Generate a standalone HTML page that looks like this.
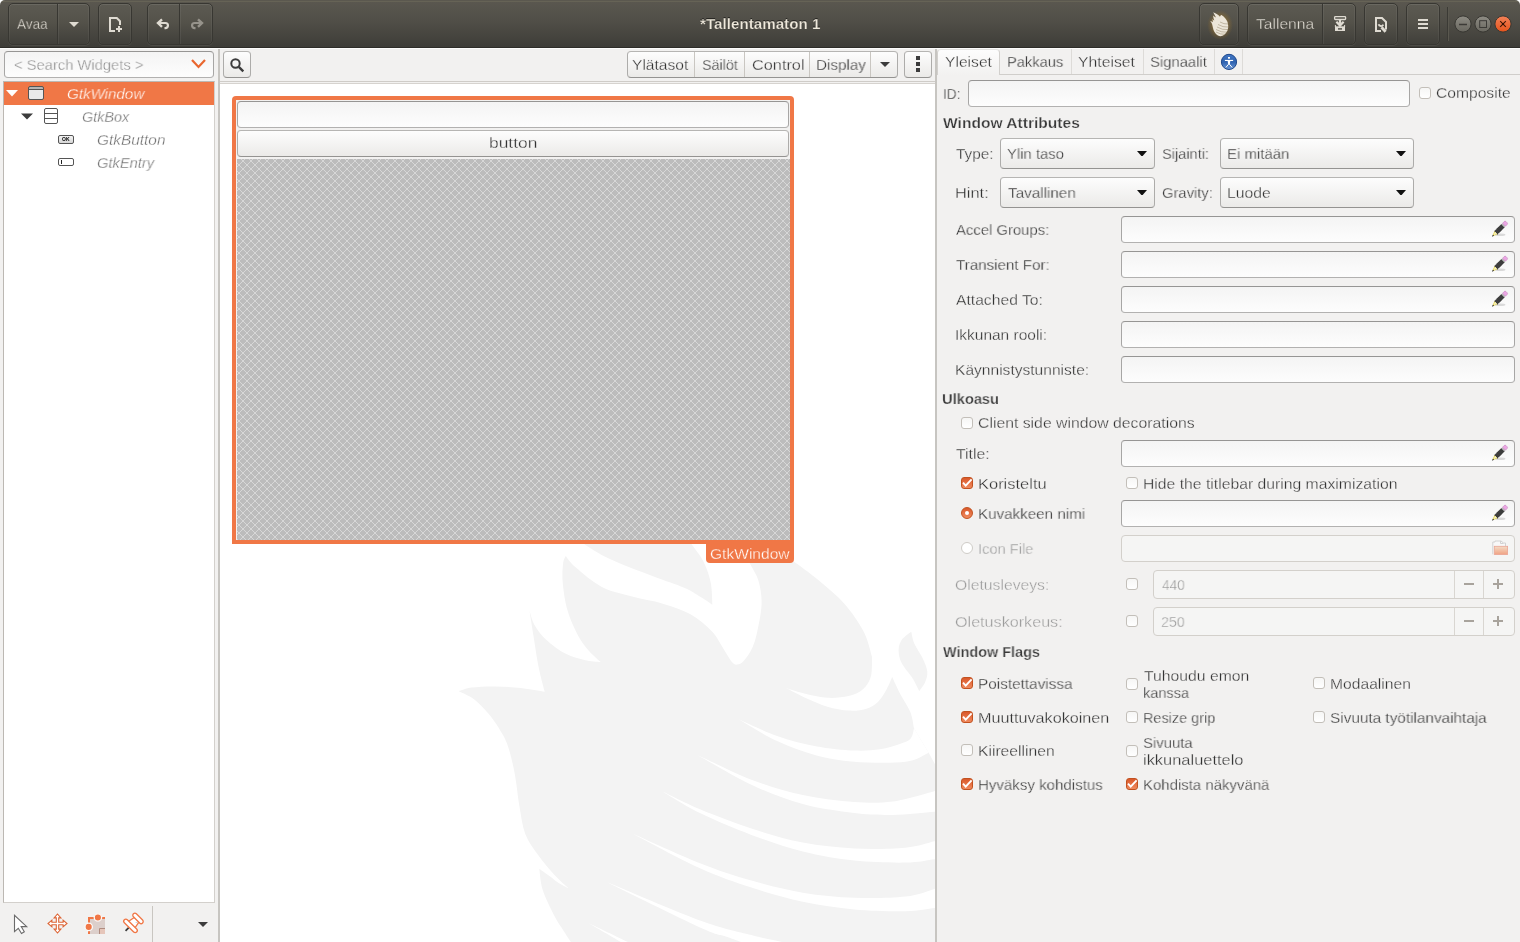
<!DOCTYPE html>
<html lang="fi"><head><meta charset="utf-8"><title>*Tallentamaton 1 - Glade</title>
<style>
html,body{margin:0;padding:0}
body{width:1520px;height:942px;overflow:hidden;background:#fff;font-family:"Liberation Sans",sans-serif;font-size:15px;color:#3c3c3c}
#w{position:absolute;left:0;top:0;width:1520px;height:942px;overflow:hidden;background:#f2f1f0;border-radius:5px 5px 0 0}
#w div,#w svg.ic,#w i.hdiv{position:absolute}
.t{height:20px;line-height:20px;white-space:pre;will-change:transform;transform-origin:0 0}
.hdr{left:0;top:0;width:1520px;height:48px;background:linear-gradient(#5b584f 0,#5b584f 1px,#666356 1px,#666356 2px,#5a574f 2px,#514f48 20px,#3e3d38 47px,#2e2d29 47px,#2e2d29 48px)}
.hb{top:3px;height:42px;box-sizing:border-box;border:1px solid #383732;border-radius:5px;background:linear-gradient(#5c5a52,#54524a 45%,#403f3a);box-shadow:inset 0 1px 0 rgba(255,255,255,.09),inset 1px 0 0 rgba(255,255,255,.05),inset -1px 0 0 rgba(255,255,255,.05),0 1px 0 rgba(255,255,255,.07)}
.hdiv{top:0;width:1px;height:40px;background:#383732;box-shadow:1px 0 0 rgba(255,255,255,.06)}
</style></head>
<body><div id="w">
<div class="hdr"></div>
<div class="hb" style="left:8px;width:82px"><i class="hdiv" style="left:48px"></i></div>
<div class="t" style="left:16.7px;top:14px;font-size:15.4px;color:#dfdbd2;transform:scaleX(0.88);-webkit-text-stroke:0.3px #4e4c45;">Avaa</div>
<div class="hb" style="left:98px;width:34px"></div>
<div class="hb" style="left:147px;width:66px"><i class="hdiv" style="left:31px"></i></div>
<div class="t" style="left:699.5px;top:14px;font-size:15.2px;color:#efe9dc;font-weight:bold;text-shadow:0 -1px 0 rgba(0,0,0,.5);-webkit-text-stroke:0.25px #4e4c45;">*Tallentamaton 1</div>
<div class="hb" style="left:1199px;width:40px"></div>
<div class="hb" style="left:1247px;width:109px"><i class="hdiv" style="left:74px"></i></div>
<div class="t" style="left:1255.7px;top:14px;font-size:15.4px;color:#dfdbd2;transform:scaleX(1.014);-webkit-text-stroke:0.3px #4e4c45;">Tallenna</div>
<div class="hb" style="left:1364px;width:34px"></div>
<div class="hb" style="left:1406px;width:34px"></div>
<div style="left:1447px;top:7px;width:1px;height:34px;background:#3b3a35;box-shadow:1px 0 0 #5a584f"></div>
<svg class="ic" style="left:0;top:0" width="1520" height="47" viewBox="0 0 1520 47"><defs><linearGradient id="wg" x1="0" y1="0" x2="0" y2="1"><stop offset="0" stop-color="#8e8c84"/><stop offset="1" stop-color="#69675f"/></linearGradient><linearGradient id="wo" x1="0" y1="0" x2="0" y2="1"><stop offset="0" stop-color="#f38258"/><stop offset="1" stop-color="#e5531b"/></linearGradient><radialGradient id="glow"><stop offset="0" stop-color="#c8962e" stop-opacity=".75"/><stop offset=".55" stop-color="#b8862a" stop-opacity=".4"/><stop offset="1" stop-color="#a87a28" stop-opacity="0"/></radialGradient></defs><g fill="none" stroke="#dfdbd2" stroke-width="2"><path d="M69 22h10l-5 5z" fill="#dfdbd2" stroke="none"/><path d="M115 31H110V18H116.800L120 21.200V25" stroke-linejoin="miter"/><path d="M116 29H122M119 26V32"/><path d="M162 19.300L158 23L162 26.800" stroke-width="2.400"/><path d="M158.500 23H165.400A2.550 2.550 0 0 1 165.400 28.100H164.500" stroke-width="2.200"/><g stroke="#96938b"><path d="M198 19.300L202 23L198 26.800" stroke-width="2.400"/><path d="M201.500 23H194.600A2.550 2.550 0 0 0 194.600 28.100H195.500" stroke-width="2.200"/></g><rect x="1334.600" y="16.600" width="11" height="2.900" rx=".8" stroke-width="1.300"/><path d="M1340 20V25.500M1336.400 21.800L1340 25.600L1343.600 21.800" stroke-width="2.200"/><path d="M1335 26.300H1345V31H1335Z" fill="#dfdbd2" stroke="none"/><path d="M1335.400 27V25M1344.600 27V25" stroke-width="1"/><path d="M1338 28.200h4v1.400h-4z" fill="#4a4842" stroke="none"/><path d="M1381 31H1376V18H1382L1386 22V29.500"/><path d="M1378.600 24.200A2.500 2.500 0 0 0 1383.300 24.600" stroke-width="1.900"/><path d="M1381.500 27.200L1385.600 31.800" stroke-width="2.800"/><path d="M1418 20H1428M1418 24H1428M1418 28H1428"/></g><ellipse cx="1220" cy="25" rx="13" ry="15" fill="url(#glow)"/><path d="M1213.200 12.200C1215 13 1218.500 14.500 1220 16.800C1220.300 15.500 1221 15 1221.500 15C1224.500 17 1226.500 19.500 1227.300 21.500L1226.800 20.300C1228.300 23.500 1228.800 27.500 1227.500 30.500C1226 34 1223 36.200 1220.500 36.200C1217 36 1214 32.500 1213 28C1212.400 25 1212 23 1210.200 21.300C1211.300 21.200 1212.300 21.600 1213 22.300C1212.700 21 1212.600 20 1212.400 19C1213 19.800 1213.600 20.200 1214.300 20.500C1213.500 18.500 1213.100 16.500 1213.300 15.500C1214 16.500 1215 17.200 1216 17.500C1215 15.500 1214 14 1213.200 12.200Z" fill="#ece6d9"/><g stroke="#7a6a48" stroke-width=".7" fill="none" opacity=".55"><path d="M1218 24.500q5 3 10 2.500M1217 27q5.500 3.200 11 2.600M1216 29.500q5.500 3.200 11 2.700M1216 32q4.500 2.600 9 2.300M1220 22q4 2.300 8 2"/></g><circle cx="1463" cy="24" r="8.100" fill="url(#wg)" stroke="#383732" stroke-width="1"/><circle cx="1483" cy="24" r="8.100" fill="url(#wg)" stroke="#383732" stroke-width="1"/><circle cx="1503" cy="24" r="8.100" fill="url(#wo)" stroke="#383732" stroke-width="1"/><path d="M1459 24.500H1467" stroke="#3c3b37" stroke-width="1.500"/><rect x="1479.700" y="20.700" width="6.800" height="6.800" fill="none" stroke="#3c3b37" stroke-width="1"/><path d="M1500.200 21.200L1505.800 26.800M1505.800 21.200L1500.200 26.800" stroke="#3d1606" stroke-width="1.100"/><circle cx="1503" cy="24" r="1" fill="#2c1004"/></svg>
<div style="left:0px;top:48px;width:1520px;height:1px;background:#fdfdfc"></div>
<div style="left:4px;top:51px;width:210px;height:27px;box-sizing:border-box;border:1px solid #a7a6a5;border-top-color:#969594;border-bottom-color:#b2b1b0;border-radius:4px;background:linear-gradient(#f4f4f4,#fdfdfd)"></div>
<div class="t" style="left:13.7px;top:55px;font-size:15.4px;color:#8c8c8c;transform:scaleX(0.9575);-webkit-text-stroke:0.3px #fbfbfb;">&lt; Search Widgets &gt;</div>
<svg class="ic" style="left:190px;top:58px" width="17" height="12" viewBox="0 0 17 12"><path d="M2 2l6.500 7 6.500-7" fill="none" stroke="#e9672f" stroke-width="2.2"/></svg>
<div style="left:3px;top:81px;width:212px;height:822px;box-sizing:border-box;border:1px solid #bcb8b3;border-right-color:#d3d0cc;border-bottom-color:#d3d0cc;background:#fff"></div>
<div style="left:4px;top:82px;width:210px;height:23px;background:#f07746"></div>
<svg class="ic" style="left:6px;top:90px" width="12" height="7"><path d="M0 0h12l-6 6.500z" fill="#fff"/></svg>
<svg class="ic" style="left:21px;top:113px" width="12" height="7"><path d="M0 .5h12l-6 6z" fill="#3c3c3c"/></svg>
<div style="left:28px;top:86px;width:16px;height:14px;box-sizing:border-box;border:1px solid #555;border-radius:2px;background:linear-gradient(#b4b4b4 0,#b4b4b4 2px,#555 2px,#555 3px,#e9e9e9 3px)"></div>
<div style="left:44px;top:108px;width:14px;height:16px;box-sizing:border-box;border:1px solid #555;border-radius:2px;background:linear-gradient(#fff 0,#fff 4px,#555 4px,#555 5px,#fff 5px,#fff 9px,#555 9px,#555 10px,#fff 10px)"></div>
<div style="left:58px;top:135px;width:16px;height:9px;box-sizing:border-box;border:1px solid #555;border-radius:2px;background:linear-gradient(#f4f4f4,#d6d6d6)"><b style="position:absolute;left:3px;top:0;font-size:5px;line-height:7px;color:#000;font-weight:bold;will-change:transform">OK</b></div>
<div style="left:58px;top:158px;width:16px;height:8px;box-sizing:border-box;border:1px solid #555;border-radius:2px;background:#fff"><i style="position:absolute;left:2px;top:1px;width:1px;height:4px;background:#222"></i></div>
<div class="t" style="left:66.8px;top:84px;font-size:15.4px;color:#fff;font-style:italic;transform:scaleX(0.9833);-webkit-text-stroke:0.3px #f07746;">GtkWindow</div>
<div class="t" style="left:82.2px;top:107px;font-size:15.4px;color:#727272;font-style:italic;transform:scaleX(0.934);-webkit-text-stroke:0.3px #fff;">GtkBox</div>
<div class="t" style="left:97.3px;top:130px;font-size:15.4px;color:#727272;font-style:italic;-webkit-text-stroke:0.3px #fff;">GtkButton</div>
<div class="t" style="left:97.3px;top:153px;font-size:15.4px;color:#727272;font-style:italic;transform:scaleX(0.9533);-webkit-text-stroke:0.3px #fff;">GtkEntry</div>
<div style="left:152px;top:906px;width:1px;height:36px;background:#c9c6c1"></div>
<svg class="ic" style="left:198px;top:922px" width="10" height="5"><path d="M0 0h10l-5 5z" fill="#3c3c3c"/></svg>
<svg class="ic" style="left:0;top:905px" width="217" height="37" viewBox="0 905 217 37"><path d="M14.500 915.300V931.600L18.300 928.300L21.500 933.500L24.300 931.800L21.200 926.600H26.700Z" fill="#fff" stroke="#6b6b6b" stroke-width="1.100" stroke-linejoin="miter"/><g transform="translate(57.500 923.500)"><path d="M0-9.500L3.400-5.600H1.200V-1.200H5.600V-3.400L9.500 0L5.600 3.400V1.200H1.200V5.600H3.400L0 9.500L-3.400 5.600H-1.200V1.200H-5.600V3.400L-9.500 0L-5.600-3.400V-1.200H-1.200V-5.600H-3.400Z" fill="#fff" stroke="#dd6434" stroke-width="1.100"/></g><rect x="88" y="917" width="17" height="17" fill="#dccfcb"/><path d="M89 934V918H105" fill="none" stroke="#f07746" stroke-width="2"/><rect x="99.500" y="928.500" width="5.500" height="5.500" fill="#e6c6ba"/><path d="M99.500 934V928.500H105" fill="none" stroke="#b08c80" stroke-width="1"/><circle cx="97.900" cy="917.500" r="3.700" fill="#f07746" stroke="#fbfaf9" stroke-width="1.300"/><circle cx="88.700" cy="926.900" r="3.700" fill="#f07746" stroke="#fbfaf9" stroke-width="1.300"/><g transform="translate(130.500 925.900) rotate(-45)"><path d="M-2.500 0H-7" stroke="#3a3a3a" stroke-width="1.700"/><path d="M1.500-4.600L9-3.200V3.200L1.500 4.600Z" fill="#fff" stroke="#f07746" stroke-width="1.300"/><path d="M6 1.200L8.200 3" stroke="#cfd4d4" stroke-width="1"/><rect x="-2.100" y="-8.700" width="4.200" height="17.400" rx="2.100" fill="#fff" stroke="#f07746" stroke-width="1.300"/><rect x="8.500" y="-6.500" width="4.200" height="13" rx="2.100" fill="#fff" stroke="#f07746" stroke-width="1.300"/></g></svg>
<div style="left:218px;top:49px;width:2px;height:893px;background:#c7c5c1"></div>
<div style="left:935px;top:49px;width:2px;height:893px;background:#c7c5c1"></div>
<div style="left:220px;top:84px;width:715px;height:858px;background:#fff"></div>
<div style="left:220px;top:81px;width:715px;height:1px;background:#cfccc8"></div>
<div style="left:220px;top:83px;width:715px;height:1px;background:#d6d3cf"></div>
<div style="left:223px;top:51px;width:28px;height:27px;box-sizing:border-box;border:1px solid #adacaa;border-top-color:#b6b5b3;border-bottom-color:#949391;border-radius:4px;background:linear-gradient(#fdfdfd,#ebeae8)"></div>
<svg class="ic" style="left:229px;top:57px" width="16" height="16" viewBox="0 0 16 16"><circle cx="6.500" cy="6.500" r="4.200" fill="none" stroke="#3c3c3c" stroke-width="2"/><path d="M9.800 9.800l4.500 4.500" stroke="#3c3c3c" stroke-width="2.400"/></svg>
<div style="left:627px;top:51px;width:271px;height:27px;box-sizing:border-box;border:1px solid #adacaa;border-top-color:#b6b5b3;border-bottom-color:#949391;border-radius:4px;background:linear-gradient(#fdfdfd,#ebeae8)"></div>
<div style="left:694px;top:52px;width:1px;height:25px;background:#c9c6c1"></div>
<div style="left:744px;top:52px;width:1px;height:25px;background:#c9c6c1"></div>
<div style="left:809px;top:52px;width:1px;height:25px;background:#c9c6c1"></div>
<div style="left:870px;top:52px;width:1px;height:25px;background:#c9c6c1"></div>
<div class="t" style="left:631.7px;top:55px;font-size:15.4px;color:#333;transform:scaleX(1.0127);-webkit-text-stroke:0.3px #f4f3f2;">Ylätasot</div>
<div class="t" style="left:701.8px;top:55px;font-size:15.4px;color:#333;transform:scaleX(0.9289);-webkit-text-stroke:0.3px #f4f3f2;">Säilöt</div>
<div class="t" style="left:751.6px;top:55px;font-size:15.4px;color:#333;transform:scaleX(1.0583);-webkit-text-stroke:0.3px #f4f3f2;">Control</div>
<div class="t" style="left:815.9px;top:55px;font-size:15.4px;color:#333;transform:scaleX(0.9878);-webkit-text-stroke:0.3px #f4f3f2;">Display</div>
<svg class="ic" style="left:880px;top:62px" width="10" height="5"><path d="M0 0h10l-5 5z" fill="#3c3c3c"/></svg>
<div style="left:904px;top:51px;width:28px;height:27px;box-sizing:border-box;border:1px solid #adacaa;border-top-color:#b6b5b3;border-bottom-color:#949391;border-radius:4px;background:linear-gradient(#fdfdfd,#ebeae8)"></div>
<div style="left:916px;top:56px;width:4px;height:4px;background:#3c3c3c"></div>
<div style="left:916px;top:62px;width:4px;height:4px;background:#3c3c3c"></div>
<div style="left:916px;top:68px;width:4px;height:4px;background:#3c3c3c"></div>
<svg class="ic" style="left:220px;top:84px" width="715" height="858" viewBox="220 84 715 858"><path d="M584.4 538.0C584.4 539.0 584.4 543.2 584.4 544.2C588.6 546.7 598.6 553.8 609.9 559.1C621.2 564.4 639.9 571.3 652.3 576.1C664.7 580.9 676.1 584.3 684.2 587.8C692.3 591.3 696.4 594.5 701.1 597.3C705.8 600.1 710.5 603.5 712.4 604.8C712.1 601.1 712.2 589.8 710.7 582.5C709.2 575.2 706.5 567.6 703.3 561.2C700.1 554.8 693.5 547.0 691.6 544.2C691.6 543.2 691.6 539.0 691.6 538.0C673.7 538.0 602.3 538.0 584.4 538.0Z" fill="#f3f3f3"/><path d="M565.7 555.9C567.4 557.9 570.0 562.5 575.9 567.6C581.8 572.7 592.2 581.9 601.4 586.7C610.6 591.5 620.9 593.5 631.1 596.3C641.4 599.1 653.0 600.7 662.9 603.7C672.8 606.7 682.4 609.7 690.5 614.3C698.6 618.9 706.1 625.3 711.8 631.3C717.5 637.3 721.1 645.3 724.5 650.4C727.9 655.5 729.8 659.7 731.9 662.1C734.0 664.5 735.2 664.8 737.2 664.6C739.2 664.4 741.1 663.7 743.6 661.0C746.1 658.3 749.8 653.2 752.1 648.3C754.4 643.3 755.7 638.7 757.3 631.3C758.9 623.9 761.4 612.2 761.6 603.7C761.8 595.2 760.4 587.1 758.4 580.4C756.4 573.7 752.6 569.1 749.9 563.4C747.2 557.7 743.3 548.9 742.0 546.0C742.0 545.0 742.0 541.0 742.0 540.0C750.7 540.0 785.3 540.0 794.0 540.0C793.9 543.5 793.6 557.7 793.5 561.2C797.7 564.4 810.4 573.3 818.9 580.4C827.4 587.5 837.0 595.2 844.4 603.7C851.8 612.2 858.9 622.4 863.5 631.3C868.1 640.1 870.6 652.5 872.0 656.8C875.4 660.2 888.8 673.6 892.2 677.0C893.5 679.6 896.7 687.1 899.7 692.9C902.7 698.7 907.9 706.1 910.3 712.0C912.7 717.9 913.4 725.6 914.0 728.3C916.5 732.4 926.2 748.6 928.7 752.7C929.9 754.9 934.8 763.8 936.0 766.0C936.7 766.0 939.3 766.0 940.0 766.0C940.0 796.0 940.0 916.0 940.0 946.0C878.7 946.0 633.3 946.0 572.0 946.0C571.8 945.3 571.0 942.7 570.8 942.0C569.2 939.6 564.2 932.0 561.5 927.6C558.8 923.2 557.6 922.1 554.5 915.9C551.4 909.7 545.3 898.1 542.8 890.2C540.3 882.3 539.9 872.3 539.3 868.7C541.0 870.0 546.5 873.8 549.8 876.2C553.1 878.6 556.0 881.2 559.1 883.2C562.2 885.2 566.9 887.4 568.5 888.3C566.2 886.1 559.6 880.5 554.5 875.0C549.4 869.5 543.0 861.9 538.1 855.1C533.2 848.3 528.4 842.3 525.3 834.1C522.2 825.9 521.2 816.2 519.4 806.1C517.6 796.0 516.7 783.5 514.7 773.4C512.8 763.3 510.2 752.8 507.7 745.4C505.1 738.0 502.5 734.2 499.4 729.0C496.2 723.8 493.0 719.1 488.8 714.1C484.6 709.1 479.0 703.0 474.0 699.2C469.0 695.4 461.2 692.5 458.7 691.2C460.9 690.6 465.7 688.4 471.8 687.6C477.9 686.8 487.0 686.4 495.2 686.5C503.4 686.6 512.5 687.1 520.7 688.0C529.0 688.9 540.7 691.2 544.7 691.8C543.7 687.7 540.6 676.8 538.7 667.4C536.8 658.0 534.9 644.9 533.4 635.5C531.9 626.1 530.2 615.2 529.6 611.1C530.4 613.4 531.7 620.1 534.5 624.9C537.3 629.7 541.1 635.0 546.2 639.8C551.3 644.6 558.9 650.2 565.3 653.6C571.7 657.0 578.5 658.6 584.4 660.0C590.3 661.4 598.0 661.8 600.7 662.1C598.7 660.1 592.4 654.8 588.6 650.4C584.8 646.0 581.5 642.2 578.0 635.5C574.5 628.8 569.9 618.9 567.4 610.1C564.9 601.3 563.4 590.3 562.7 582.5C562.0 574.7 562.6 567.8 563.1 563.4C563.6 559.0 565.3 557.1 565.7 555.9Z" fill="#f3f3f3"/><path d="M911.3 631.8C909.7 633.1 903.9 636.7 901.8 639.8C899.7 642.9 898.6 646.5 898.6 650.4C898.6 654.3 899.5 658.6 901.8 663.2C904.1 667.8 909.5 673.4 912.4 678.1C915.3 682.8 918.1 689.0 919.2 691.2C920.2 689.7 923.8 685.5 925.1 682.3C926.5 679.0 927.6 675.6 927.3 671.7C926.9 667.8 925.1 663.6 923.0 659.0C920.9 654.4 916.5 648.6 914.5 644.1C912.5 639.6 911.8 633.8 911.3 631.8Z" fill="#f3f3f3"/><path d="M786.0 688.0C789.4 689.0 799.3 692.4 806.2 694.0C813.1 695.6 820.3 697.4 827.4 697.8C834.5 698.1 842.7 697.6 848.7 696.1C854.7 694.6 859.8 692.1 863.5 688.7C867.2 685.3 869.6 681.2 871.0 675.9C872.4 670.6 871.8 660.0 872.0 656.8C875.8 655.7 891.2 651.1 895.0 650.0C894.5 654.5 892.7 672.5 892.2 677.0C891.3 679.0 889.2 684.6 886.9 688.7C884.6 692.8 881.9 698.0 878.4 701.4C874.9 704.8 870.7 707.4 865.7 708.9C860.8 710.4 855.1 711.0 848.7 710.6C842.3 710.2 834.5 708.8 827.4 706.7C820.3 704.6 813.1 701.3 806.2 698.2C799.3 695.1 789.4 689.7 786.0 688.0Z" fill="#fff"/><path d="M738.5 719.3C744.9 722.1 764.2 731.5 777.1 736.0C790.0 740.5 802.8 743.8 815.6 746.2C828.5 748.6 843.5 750.1 854.2 750.6C864.9 751.1 872.2 750.4 879.9 749.3C887.6 748.1 895.3 745.5 900.4 743.7C905.5 741.9 908.4 741.1 910.7 738.5C913.0 735.9 913.5 730.0 914.0 728.3C916.5 732.4 926.2 748.6 928.7 752.7C924.8 754.2 917.9 760.2 905.5 761.7C893.1 763.2 869.2 762.8 854.2 761.7C839.2 760.6 828.5 758.6 815.6 755.2C802.8 751.8 790.0 747.1 777.1 741.1C764.2 735.1 744.9 722.9 738.5 719.3Z" fill="#fff"/><path d="M697.0 754.7C706.1 758.9 733.8 773.0 751.4 779.7C769.0 786.4 785.7 791.4 802.8 795.1C819.9 798.8 839.2 800.9 854.2 802.0C869.2 803.1 879.4 803.3 892.7 801.5C906.1 799.7 926.4 793.3 934.3 791.2C942.2 789.1 939.0 789.4 940.0 789.0C940.0 792.5 940.0 806.5 940.0 810.0C939.0 810.3 942.2 811.0 934.3 811.8C926.4 812.6 906.1 814.7 892.7 814.9C879.4 815.1 869.2 814.9 854.2 813.1C839.2 811.3 819.9 808.8 802.8 804.1C785.7 799.4 769.0 793.0 751.4 784.8C733.8 776.6 706.1 759.7 697.0 754.7Z" fill="#fff"/><path d="M662.6 791.4C668.8 794.4 685.2 803.0 700.0 809.2C714.8 815.4 734.3 822.9 751.4 828.5C768.5 834.1 785.7 839.3 802.8 842.6C819.9 845.9 837.1 847.6 854.2 848.5C871.3 849.4 892.1 848.9 905.5 847.7C918.9 846.5 928.5 842.6 934.3 841.3C940.0 840.0 939.0 840.2 940.0 840.0C940.0 843.0 940.0 855.0 940.0 858.0C939.0 858.2 940.0 858.5 934.3 859.3C928.5 860.1 918.9 862.4 905.5 862.6C892.1 862.8 871.3 862.4 854.2 860.6C837.1 858.8 819.9 855.9 802.8 851.6C785.7 847.3 768.5 841.3 751.4 834.9C734.3 828.5 714.8 820.4 700.0 813.1C685.2 805.9 668.8 795.0 662.6 791.4Z" fill="#fff"/><path d="M632.7 833.7C643.9 838.6 680.2 855.4 700.0 863.2C719.8 871.0 734.3 875.7 751.4 880.6C768.5 885.5 785.7 889.8 802.8 892.7C819.9 895.6 837.1 897.1 854.2 897.8C871.3 898.4 892.1 898.1 905.5 896.6C918.9 895.1 928.5 890.5 934.3 888.9C940.0 887.3 939.0 887.3 940.0 887.0C940.0 890.3 940.0 903.7 940.0 907.0C939.0 907.2 940.0 907.4 934.3 908.1C928.5 908.8 918.9 911.0 905.5 911.2C892.1 911.4 871.3 911.0 854.2 909.4C837.1 907.8 819.9 905.3 802.8 901.7C785.7 898.1 768.5 893.2 751.4 887.6C734.3 882.0 719.8 877.3 700.0 868.3C680.2 859.3 643.9 839.5 632.7 833.7Z" fill="#fff"/><path d="M607.7 882.5C623.1 888.8 676.0 911.7 700.0 920.5C724.0 929.3 737.7 931.5 751.4 935.1C765.1 938.7 774.1 940.2 782.2 942.0C790.3 943.8 797.0 945.3 800.0 946.0C793.3 946.7 766.7 949.3 760.0 950.0C756.8 948.7 746.7 944.3 741.0 942.0C735.3 939.7 732.5 938.8 725.7 936.4C718.9 934.0 719.7 936.4 700.0 927.4C680.3 918.4 623.1 890.0 607.7 882.5Z" fill="#fff"/><path d="M588.3 922.9C594.9 926.1 619.4 937.8 628.0 942.0C636.6 946.2 638.0 947.0 640.0 948.0C638.3 948.0 631.7 948.0 630.0 948.0C628.5 947.0 628.0 946.2 621.0 942.0C614.0 937.8 593.8 926.1 588.3 922.9Z" fill="#fff"/></svg>
<div style="left:232px;top:96px;width:562px;height:448px;background:#f07746;border-radius:4px 4px 0 0"></div>
<div style="left:706px;top:540px;width:88px;height:23px;background:#f07746;border-radius:0 0 4px 4px"></div>
<div style="left:236px;top:100px;width:554px;height:440px;background:#f2f1f0"></div>
<svg class="ic" style="left:237px;top:159px" width="553" height="381"><defs><pattern id="ph" width="8" height="8" patternUnits="userSpaceOnUse" x="2" y="6"><rect width="8" height="8" fill="#bcbcbc"/><path d="M-1 -1L9 9M9 -1L-1 9M-1 7L1 9M7 -1L9 1M7 9L9 7M-1 1L1 -1" stroke="#dadada" stroke-width=".9" fill="none"/></pattern></defs><rect width="553" height="381" fill="url(#ph)"/></svg>
<div style="left:237px;top:101px;width:552px;height:27px;box-sizing:border-box;border:1px solid #a7a6a5;border-top-color:#969594;border-bottom-color:#b2b1b0;border-radius:4px;background:linear-gradient(#f4f4f4,#fdfdfd)"></div>
<div style="left:237px;top:130px;width:552px;height:27px;box-sizing:border-box;border:1px solid #adacaa;border-top-color:#b6b5b3;border-bottom-color:#949391;border-radius:4px;background:linear-gradient(#fdfdfd,#ebeae8)"></div>
<div class="t" style="left:489.1px;top:133px;font-size:15.4px;color:#333;transform:scaleX(1.1293);-webkit-text-stroke:0.3px #f4f3f2;">button</div>
<div class="t" style="left:710.1px;top:544px;font-size:15.4px;color:#fff;transform:scaleX(1.0115);-webkit-text-stroke:0.3px #f07746;">GtkWindow</div>
<div style="left:937px;top:74px;width:583px;height:1px;background:#d0cecb"></div>
<div style="left:937px;top:49px;width:63px;height:26px;box-sizing:border-box;border:1px solid #d2d0cd;border-top-color:#e6e5e3;border-bottom:none;border-radius:4px 4px 0 0;background:linear-gradient(#fdfdfd,#f2f1f0)"></div>
<div style="left:1071px;top:49px;width:1px;height:25px;background:#dddbd8"></div>
<div style="left:1143px;top:49px;width:1px;height:25px;background:#dddbd8"></div>
<div style="left:1214px;top:49px;width:1px;height:25px;background:#dddbd8"></div>
<div style="left:1242px;top:49px;width:1px;height:25px;background:#dddbd8"></div>
<div class="t" style="left:944.7px;top:52px;font-size:15.4px;color:#333;transform:scaleX(1.0156);-webkit-text-stroke:0.3px #f7f7f6;">Yleiset</div>
<div class="t" style="left:1007.1px;top:52px;font-size:15.4px;color:#333;transform:scaleX(0.9534);-webkit-text-stroke:0.3px #f2f1f0;">Pakkaus</div>
<div class="t" style="left:1077.7px;top:52px;font-size:15.4px;color:#333;transform:scaleX(1.0236);-webkit-text-stroke:0.3px #f2f1f0;">Yhteiset</div>
<div class="t" style="left:1150.1px;top:52px;font-size:15.4px;color:#333;transform:scaleX(0.9638);-webkit-text-stroke:0.3px #f2f1f0;">Signaalit</div>
<svg class="ic" style="left:1219px;top:52px" width="20" height="20" viewBox="1219 52 20 20"><defs><linearGradient id="a11" x1="0" y1="0" x2="0" y2="1"><stop offset="0" stop-color="#4378c4"/><stop offset=".5" stop-color="#2e62b0"/><stop offset="1" stop-color="#6c98d6"/></linearGradient></defs><circle cx="1229" cy="61.900" r="7.600" fill="url(#a11)" stroke="#1e488c" stroke-width="1"/><rect x="1228" y="57" width="2" height="1.700" fill="#fff"/><rect x="1224.900" y="59.900" width="8.200" height="1.100" fill="#fff"/><path d="M1227.700 61H1230.300L1229.800 64.600H1228.200Z" fill="#fff"/><path d="M1228.600 64.200L1225.900 67.400M1229.400 64.200L1232.100 67.400" stroke="#fff" stroke-width="1"/></svg>
<div class="t" style="left:943.2px;top:84px;font-size:15.4px;color:#333;transform:scaleX(0.8833);-webkit-text-stroke:0.3px #f2f1f0;">ID:</div>
<div style="left:968px;top:80px;width:442px;height:27px;box-sizing:border-box;border:1px solid #a7a6a5;border-top-color:#969594;border-bottom-color:#b2b1b0;border-radius:4px;background:linear-gradient(#f4f4f4,#fdfdfd)"></div>
<div style="left:1419px;top:87px;width:12px;height:12px;box-sizing:border-box;border:1px solid #c3bfb9;border-radius:3px;background:linear-gradient(#f6f6f5,#fff)"></div>
<div class="t" style="left:1436.3px;top:83px;font-size:15.4px;color:#333;transform:scaleX(1.0153);-webkit-text-stroke:0.3px #f2f1f0;">Composite</div>
<div class="t" style="left:943.0px;top:113px;font-size:15.2px;color:#3a3a3a;font-weight:bold;transform:scaleX(1.0256);-webkit-text-stroke:0.25px #f2f1f0;">Window Attributes</div>
<div class="t" style="left:956.1px;top:144px;font-size:15.4px;color:#333;-webkit-text-stroke:0.3px #f2f1f0;">Type:</div>
<div style="left:1000px;top:138px;width:155px;height:31px;box-sizing:border-box;border:1px solid #adacaa;border-top-color:#b6b5b3;border-bottom-color:#949391;border-radius:4px;background:linear-gradient(#fdfdfd,#ebeae8)"></div>
<svg class="ic" style="left:1137px;top:151px" width="10" height="5"><path d="M0 0h10l-5 5.700z" fill="#111"/></svg>
<div class="t" style="left:1007.1px;top:144px;font-size:15.4px;color:#333;transform:scaleX(0.9638);-webkit-text-stroke:0.3px #f4f3f2;">Ylin taso</div>
<div class="t" style="left:1162.2px;top:144px;font-size:15.4px;color:#333;transform:scaleX(0.9468);-webkit-text-stroke:0.3px #f2f1f0;">Sijainti:</div>
<div style="left:1220px;top:138px;width:194px;height:31px;box-sizing:border-box;border:1px solid #adacaa;border-top-color:#b6b5b3;border-bottom-color:#949391;border-radius:4px;background:linear-gradient(#fdfdfd,#ebeae8)"></div>
<svg class="ic" style="left:1396px;top:151px" width="10" height="5"><path d="M0 0h10l-5 5.700z" fill="#111"/></svg>
<div class="t" style="left:1227.1px;top:144px;font-size:15.4px;color:#333;transform:scaleX(0.9726);-webkit-text-stroke:0.3px #f4f3f2;">Ei mitään</div>
<div class="t" style="left:955.0px;top:183px;font-size:15.4px;color:#333;transform:scaleX(1.0655);-webkit-text-stroke:0.3px #f2f1f0;">Hint:</div>
<div style="left:1000px;top:177px;width:155px;height:31px;box-sizing:border-box;border:1px solid #adacaa;border-top-color:#b6b5b3;border-bottom-color:#949391;border-radius:4px;background:linear-gradient(#fdfdfd,#ebeae8)"></div>
<svg class="ic" style="left:1137px;top:190px" width="10" height="5"><path d="M0 0h10l-5 5.700z" fill="#111"/></svg>
<div class="t" style="left:1008.1px;top:183px;font-size:15.4px;color:#333;transform:scaleX(0.9897);-webkit-text-stroke:0.3px #f4f3f2;">Tavallinen</div>
<div class="t" style="left:1162.1px;top:183px;font-size:15.4px;color:#333;transform:scaleX(0.9588);-webkit-text-stroke:0.3px #f2f1f0;">Gravity:</div>
<div style="left:1220px;top:177px;width:194px;height:31px;box-sizing:border-box;border:1px solid #adacaa;border-top-color:#b6b5b3;border-bottom-color:#949391;border-radius:4px;background:linear-gradient(#fdfdfd,#ebeae8)"></div>
<svg class="ic" style="left:1396px;top:190px" width="10" height="5"><path d="M0 0h10l-5 5.700z" fill="#111"/></svg>
<div class="t" style="left:1227.1px;top:183px;font-size:15.4px;color:#333;transform:scaleX(1.022);-webkit-text-stroke:0.3px #f4f3f2;">Luode</div>
<div class="t" style="left:956.1px;top:220px;font-size:15.4px;color:#333;transform:scaleX(0.9635);-webkit-text-stroke:0.3px #f2f1f0;">Accel Groups:</div>
<div style="left:1121px;top:216px;width:394px;height:27px;box-sizing:border-box;border:1px solid #a7a6a5;border-top-color:#969594;border-bottom-color:#b2b1b0;border-radius:4px;background:linear-gradient(#f4f4f4,#fdfdfd)"></div>
<svg class="ic" style="left:1489px;top:219px" width="22" height="22" viewBox="1489 219 22 22"><ellipse cx="1500" cy="234.7" rx="5.500" ry="1.300" fill="#000" opacity=".13"/><g transform="translate(1492 236.7) rotate(-45)"><path d="M5.500-2.100H15.500V2.100H5.500Z" fill="#3d3d3d"/><path d="M5.500-2.100H15.500M5.500 2.100H15.500" stroke="#111" stroke-width=".8" stroke-dasharray="1 .7"/><path d="M1.500-.600L5.500-2.100V2.100L1.500 .600Z" fill="#e4d65a"/><path d="M3-.500L5.500-1V1L3 .500Z" fill="#f7f2c0"/><path d="M0 0L2-.800V.800Z" fill="#111"/><path d="M15.500-2.100H17V2.100H15.500Z" fill="#b8b8b8"/><path d="M17-2.100H19.300Q20.600-2.100 20.600-.800V.800Q20.600 2.100 19.300 2.100H17Z" fill="#eaa6e3" stroke="#c07fba" stroke-width=".5"/></g></svg>
<div class="t" style="left:956.1px;top:255px;font-size:15.4px;color:#333;transform:scaleX(0.984);-webkit-text-stroke:0.3px #f2f1f0;">Transient For:</div>
<div style="left:1121px;top:251px;width:394px;height:27px;box-sizing:border-box;border:1px solid #a7a6a5;border-top-color:#969594;border-bottom-color:#b2b1b0;border-radius:4px;background:linear-gradient(#f4f4f4,#fdfdfd)"></div>
<svg class="ic" style="left:1489px;top:254px" width="22" height="22" viewBox="1489 254 22 22"><ellipse cx="1500" cy="269.7" rx="5.500" ry="1.300" fill="#000" opacity=".13"/><g transform="translate(1492 271.7) rotate(-45)"><path d="M5.500-2.100H15.500V2.100H5.500Z" fill="#3d3d3d"/><path d="M5.500-2.100H15.500M5.500 2.100H15.500" stroke="#111" stroke-width=".8" stroke-dasharray="1 .7"/><path d="M1.500-.600L5.500-2.100V2.100L1.500 .600Z" fill="#e4d65a"/><path d="M3-.500L5.500-1V1L3 .500Z" fill="#f7f2c0"/><path d="M0 0L2-.800V.800Z" fill="#111"/><path d="M15.500-2.100H17V2.100H15.500Z" fill="#b8b8b8"/><path d="M17-2.100H19.300Q20.600-2.100 20.600-.800V.800Q20.600 2.100 19.300 2.100H17Z" fill="#eaa6e3" stroke="#c07fba" stroke-width=".5"/></g></svg>
<div class="t" style="left:956.1px;top:290px;font-size:15.4px;color:#333;transform:scaleX(1.0179);-webkit-text-stroke:0.3px #f2f1f0;">Attached To:</div>
<div style="left:1121px;top:286px;width:394px;height:27px;box-sizing:border-box;border:1px solid #a7a6a5;border-top-color:#969594;border-bottom-color:#b2b1b0;border-radius:4px;background:linear-gradient(#f4f4f4,#fdfdfd)"></div>
<svg class="ic" style="left:1489px;top:289px" width="22" height="22" viewBox="1489 289 22 22"><ellipse cx="1500" cy="304.7" rx="5.500" ry="1.300" fill="#000" opacity=".13"/><g transform="translate(1492 306.7) rotate(-45)"><path d="M5.500-2.100H15.500V2.100H5.500Z" fill="#3d3d3d"/><path d="M5.500-2.100H15.500M5.500 2.100H15.500" stroke="#111" stroke-width=".8" stroke-dasharray="1 .7"/><path d="M1.500-.600L5.500-2.100V2.100L1.500 .600Z" fill="#e4d65a"/><path d="M3-.500L5.500-1V1L3 .500Z" fill="#f7f2c0"/><path d="M0 0L2-.800V.800Z" fill="#111"/><path d="M15.500-2.100H17V2.100H15.500Z" fill="#b8b8b8"/><path d="M17-2.100H19.300Q20.600-2.100 20.600-.800V.800Q20.600 2.100 19.300 2.100H17Z" fill="#eaa6e3" stroke="#c07fba" stroke-width=".5"/></g></svg>
<div class="t" style="left:955.1px;top:325px;font-size:15.4px;color:#333;transform:scaleX(1.0056);-webkit-text-stroke:0.3px #f2f1f0;">Ikkunan rooli:</div>
<div style="left:1121px;top:321px;width:394px;height:27px;box-sizing:border-box;border:1px solid #a7a6a5;border-top-color:#969594;border-bottom-color:#b2b1b0;border-radius:4px;background:linear-gradient(#f4f4f4,#fdfdfd)"></div>
<div class="t" style="left:955.1px;top:360px;font-size:15.4px;color:#333;transform:scaleX(1.0115);-webkit-text-stroke:0.3px #f2f1f0;">Käynnistystunniste:</div>
<div style="left:1121px;top:356px;width:394px;height:27px;box-sizing:border-box;border:1px solid #a7a6a5;border-top-color:#969594;border-bottom-color:#b2b1b0;border-radius:4px;background:linear-gradient(#f4f4f4,#fdfdfd)"></div>
<div class="t" style="left:942.4px;top:389px;font-size:15.2px;color:#3a3a3a;font-weight:bold;transform:scaleX(0.9649);-webkit-text-stroke:0.25px #f2f1f0;">Ulkoasu</div>
<div style="left:961px;top:417px;width:12px;height:12px;box-sizing:border-box;border:1px solid #c3bfb9;border-radius:3px;background:linear-gradient(#f6f6f5,#fff)"></div>
<div class="t" style="left:978.1px;top:413px;font-size:15.4px;color:#333;transform:scaleX(1.0252);-webkit-text-stroke:0.3px #f2f1f0;">Client side window decorations</div>
<div class="t" style="left:956.1px;top:444px;font-size:15.4px;color:#333;transform:scaleX(1.0281);-webkit-text-stroke:0.3px #f2f1f0;">Title:</div>
<div style="left:1121px;top:440px;width:394px;height:27px;box-sizing:border-box;border:1px solid #a7a6a5;border-top-color:#969594;border-bottom-color:#b2b1b0;border-radius:4px;background:linear-gradient(#f4f4f4,#fdfdfd)"></div>
<svg class="ic" style="left:1489px;top:443px" width="22" height="22" viewBox="1489 443 22 22"><ellipse cx="1500" cy="458.7" rx="5.500" ry="1.300" fill="#000" opacity=".13"/><g transform="translate(1492 460.7) rotate(-45)"><path d="M5.500-2.100H15.500V2.100H5.500Z" fill="#3d3d3d"/><path d="M5.500-2.100H15.500M5.500 2.100H15.500" stroke="#111" stroke-width=".8" stroke-dasharray="1 .7"/><path d="M1.500-.600L5.500-2.100V2.100L1.500 .600Z" fill="#e4d65a"/><path d="M3-.500L5.500-1V1L3 .500Z" fill="#f7f2c0"/><path d="M0 0L2-.800V.800Z" fill="#111"/><path d="M15.500-2.100H17V2.100H15.500Z" fill="#b8b8b8"/><path d="M17-2.100H19.300Q20.600-2.100 20.600-.800V.800Q20.600 2.100 19.300 2.100H17Z" fill="#eaa6e3" stroke="#c07fba" stroke-width=".5"/></g></svg>
<div style="left:961px;top:477px;width:12px;height:12px;box-sizing:border-box;border:1px solid #c2511f;border-radius:3px;background:linear-gradient(#d9582a,#f08a5e)"><svg width="10" height="10" style="position:absolute;left:0;top:0;overflow:visible"><path d="M1 4.700L3.700 7.700L9.600 1.400" fill="none" stroke="#fff" stroke-width="1.900"/></svg></div>
<div class="t" style="left:978.0px;top:474px;font-size:15.4px;color:#333;transform:scaleX(1.0694);-webkit-text-stroke:0.3px #f2f1f0;">Koristeltu</div>
<div style="left:1126px;top:477px;width:12px;height:12px;box-sizing:border-box;border:1px solid #c3bfb9;border-radius:3px;background:linear-gradient(#f6f6f5,#fff)"></div>
<div class="t" style="left:1143.1px;top:474px;font-size:15.4px;color:#333;transform:scaleX(1.0219);-webkit-text-stroke:0.3px #f2f1f0;">Hide the titlebar during maximization</div>
<div style="left:961px;top:507px;width:12px;height:12px;box-sizing:border-box;border:1px solid #c2511f;border-radius:50%;background:linear-gradient(#d9582a,#f08a5e)"><i style="position:absolute;left:3px;top:3px;width:4px;height:4px;border-radius:50%;background:#fff"></i></div>
<div class="t" style="left:978.1px;top:504px;font-size:15.4px;color:#333;transform:scaleX(0.986);-webkit-text-stroke:0.3px #f2f1f0;">Kuvakkeen nimi</div>
<div style="left:1121px;top:500px;width:394px;height:27px;box-sizing:border-box;border:1px solid #a7a6a5;border-top-color:#969594;border-bottom-color:#b2b1b0;border-radius:4px;background:linear-gradient(#f4f4f4,#fdfdfd)"></div>
<svg class="ic" style="left:1489px;top:503px" width="22" height="22" viewBox="1489 503 22 22"><ellipse cx="1500" cy="518.7" rx="5.500" ry="1.300" fill="#000" opacity=".13"/><g transform="translate(1492 520.7) rotate(-45)"><path d="M5.500-2.100H15.500V2.100H5.500Z" fill="#3d3d3d"/><path d="M5.500-2.100H15.500M5.500 2.100H15.500" stroke="#111" stroke-width=".8" stroke-dasharray="1 .7"/><path d="M1.500-.600L5.500-2.100V2.100L1.500 .600Z" fill="#e4d65a"/><path d="M3-.500L5.500-1V1L3 .500Z" fill="#f7f2c0"/><path d="M0 0L2-.800V.800Z" fill="#111"/><path d="M15.500-2.100H17V2.100H15.500Z" fill="#b8b8b8"/><path d="M17-2.100H19.300Q20.600-2.100 20.600-.800V.800Q20.600 2.100 19.300 2.100H17Z" fill="#eaa6e3" stroke="#c07fba" stroke-width=".5"/></g></svg>
<div style="left:961px;top:542px;width:12px;height:12px;box-sizing:border-box;border:1px solid #cfccc7;border-radius:50%;background:#fff"></div>
<div class="t" style="left:978.1px;top:539px;font-size:15.4px;color:#9c9c9c;transform:scaleX(0.9526);-webkit-text-stroke:0.3px #f2f1f0;">Icon File</div>
<div style="left:1121px;top:535px;width:394px;height:27px;box-sizing:border-box;border:1px solid #d3d0cb;border-radius:4px;background:#f5f5f4"></div>
<svg class="ic" style="left:1490px;top:538px" width="20" height="20" viewBox="1490 538 20 20"><defs><linearGradient id="fo" x1="0" y1="0" x2="0" y2="1"><stop offset="0" stop-color="#f4dcc6"/><stop offset="1" stop-color="#f0a283"/></linearGradient></defs><path d="M1492.800 554.300V542H1495V541H1501L1503.500 543H1505.500V546" fill="#f8f8f8" stroke="#d2d2d2" stroke-width="1"/><path d="M1500.500 541V543.500H1503.500" fill="none" stroke="#d2d2d2"/><rect x="1494.300" y="546.300" width="13.300" height="8.300" fill="url(#fo)" stroke="#eaa595" stroke-width=".8"/></svg>
<div class="t" style="left:955.1px;top:575px;font-size:15.4px;color:#9c9c9c;transform:scaleX(1.0211);-webkit-text-stroke:0.3px #f2f1f0;">Oletusleveys:</div>
<div style="left:1126px;top:578px;width:12px;height:12px;box-sizing:border-box;border:1px solid #c3bfb9;border-radius:3px;background:linear-gradient(#f6f6f5,#fff)"></div>
<div style="left:1153px;top:570px;width:362px;height:29px;box-sizing:border-box;border:1px solid #d3d0cb;border-radius:4px;background:#f5f5f4"></div>
<div style="left:1454px;top:571px;width:1px;height:27px;background:#d9d6d1"></div>
<div style="left:1483px;top:571px;width:1px;height:27px;background:#d9d6d1"></div>
<div style="left:1464px;top:583px;width:10px;height:2px;background:#a8a39c"></div>
<div style="left:1493px;top:583px;width:10px;height:2px;background:#a8a39c"></div>
<div style="left:1497px;top:579px;width:2px;height:10px;background:#a8a39c"></div>
<div class="t" style="left:1162.3px;top:575px;font-size:15.4px;color:#9c9c9c;transform:scaleX(0.892);-webkit-text-stroke:0.3px #f5f5f4;">440</div>
<div class="t" style="left:955.1px;top:612px;font-size:15.4px;color:#9c9c9c;transform:scaleX(1.049);-webkit-text-stroke:0.3px #f2f1f0;">Oletuskorkeus:</div>
<div style="left:1126px;top:615px;width:12px;height:12px;box-sizing:border-box;border:1px solid #c3bfb9;border-radius:3px;background:linear-gradient(#f6f6f5,#fff)"></div>
<div style="left:1153px;top:607px;width:362px;height:29px;box-sizing:border-box;border:1px solid #d3d0cb;border-radius:4px;background:#f5f5f4"></div>
<div style="left:1454px;top:608px;width:1px;height:27px;background:#d9d6d1"></div>
<div style="left:1483px;top:608px;width:1px;height:27px;background:#d9d6d1"></div>
<div style="left:1464px;top:620px;width:10px;height:2px;background:#a8a39c"></div>
<div style="left:1493px;top:620px;width:10px;height:2px;background:#a8a39c"></div>
<div style="left:1497px;top:616px;width:2px;height:10px;background:#a8a39c"></div>
<div class="t" style="left:1161.4px;top:612px;font-size:15.4px;color:#9c9c9c;transform:scaleX(0.9292);-webkit-text-stroke:0.3px #f5f5f4;">250</div>
<div class="t" style="left:943.4px;top:642px;font-size:15.2px;color:#3a3a3a;font-weight:bold;transform:scaleX(0.951);-webkit-text-stroke:0.25px #f2f1f0;">Window Flags</div>
<div style="left:961px;top:677px;width:12px;height:12px;box-sizing:border-box;border:1px solid #c2511f;border-radius:3px;background:linear-gradient(#d9582a,#f08a5e)"><svg width="10" height="10" style="position:absolute;left:0;top:0;overflow:visible"><path d="M1 4.700L3.700 7.700L9.600 1.400" fill="none" stroke="#fff" stroke-width="1.900"/></svg></div>
<div class="t" style="left:978.1px;top:674px;font-size:15.4px;color:#333;transform:scaleX(0.9947);-webkit-text-stroke:0.3px #f2f1f0;">Poistettavissa</div>
<div style="left:1126px;top:678px;width:12px;height:12px;box-sizing:border-box;border:1px solid #c3bfb9;border-radius:3px;background:linear-gradient(#f6f6f5,#fff)"></div>
<div class="t" style="left:1144.1px;top:666px;font-size:15.4px;color:#333;transform:scaleX(1.0225);-webkit-text-stroke:0.3px #f2f1f0;">Tuhoudu emon</div>
<div class="t" style="left:1143.2px;top:683px;font-size:15.4px;color:#333;transform:scaleX(0.9437);-webkit-text-stroke:0.3px #f2f1f0;">kanssa</div>
<div style="left:1313px;top:677px;width:12px;height:12px;box-sizing:border-box;border:1px solid #c3bfb9;border-radius:3px;background:linear-gradient(#f6f6f5,#fff)"></div>
<div class="t" style="left:1330.1px;top:674px;font-size:15.4px;color:#333;transform:scaleX(1.0167);-webkit-text-stroke:0.3px #f2f1f0;">Modaalinen</div>
<div style="left:961px;top:711px;width:12px;height:12px;box-sizing:border-box;border:1px solid #c2511f;border-radius:3px;background:linear-gradient(#d9582a,#f08a5e)"><svg width="10" height="10" style="position:absolute;left:0;top:0;overflow:visible"><path d="M1 4.700L3.700 7.700L9.600 1.400" fill="none" stroke="#fff" stroke-width="1.900"/></svg></div>
<div class="t" style="left:978.0px;top:708px;font-size:15.4px;color:#333;transform:scaleX(1.0512);-webkit-text-stroke:0.3px #f2f1f0;">Muuttuvakokoinen</div>
<div style="left:1126px;top:711px;width:12px;height:12px;box-sizing:border-box;border:1px solid #c3bfb9;border-radius:3px;background:linear-gradient(#f6f6f5,#fff)"></div>
<div class="t" style="left:1143.2px;top:708px;font-size:15.4px;color:#333;transform:scaleX(0.9382);-webkit-text-stroke:0.3px #f2f1f0;">Resize grip</div>
<div style="left:1313px;top:711px;width:12px;height:12px;box-sizing:border-box;border:1px solid #c3bfb9;border-radius:3px;background:linear-gradient(#f6f6f5,#fff)"></div>
<div class="t" style="left:1330.1px;top:708px;font-size:15.4px;color:#333;transform:scaleX(0.9955);-webkit-text-stroke:0.3px #f2f1f0;">Sivuuta työtilanvaihtaja</div>
<div style="left:961px;top:744px;width:12px;height:12px;box-sizing:border-box;border:1px solid #c3bfb9;border-radius:3px;background:linear-gradient(#f6f6f5,#fff)"></div>
<div class="t" style="left:978.1px;top:741px;font-size:15.4px;color:#333;transform:scaleX(1.0176);-webkit-text-stroke:0.3px #f2f1f0;">Kiireellinen</div>
<div style="left:1126px;top:745px;width:12px;height:12px;box-sizing:border-box;border:1px solid #c3bfb9;border-radius:3px;background:linear-gradient(#f6f6f5,#fff)"></div>
<div class="t" style="left:1143.1px;top:733px;font-size:15.4px;color:#333;transform:scaleX(0.966);-webkit-text-stroke:0.3px #f2f1f0;">Sivuuta</div>
<div class="t" style="left:1143.0px;top:750px;font-size:15.4px;color:#333;transform:scaleX(1.0677);-webkit-text-stroke:0.3px #f2f1f0;">ikkunaluettelo</div>
<div style="left:961px;top:778px;width:12px;height:12px;box-sizing:border-box;border:1px solid #c2511f;border-radius:3px;background:linear-gradient(#d9582a,#f08a5e)"><svg width="10" height="10" style="position:absolute;left:0;top:0;overflow:visible"><path d="M1 4.700L3.700 7.700L9.600 1.400" fill="none" stroke="#fff" stroke-width="1.900"/></svg></div>
<div class="t" style="left:978.1px;top:775px;font-size:15.4px;color:#333;transform:scaleX(0.9786);-webkit-text-stroke:0.3px #f2f1f0;">Hyväksy kohdistus</div>
<div style="left:1126px;top:778px;width:12px;height:12px;box-sizing:border-box;border:1px solid #c2511f;border-radius:3px;background:linear-gradient(#d9582a,#f08a5e)"><svg width="10" height="10" style="position:absolute;left:0;top:0;overflow:visible"><path d="M1 4.700L3.700 7.700L9.600 1.400" fill="none" stroke="#fff" stroke-width="1.900"/></svg></div>
<div class="t" style="left:1143.1px;top:775px;font-size:15.4px;color:#333;transform:scaleX(0.9713);-webkit-text-stroke:0.3px #f2f1f0;">Kohdista näkyvänä</div>
</div></body></html>
